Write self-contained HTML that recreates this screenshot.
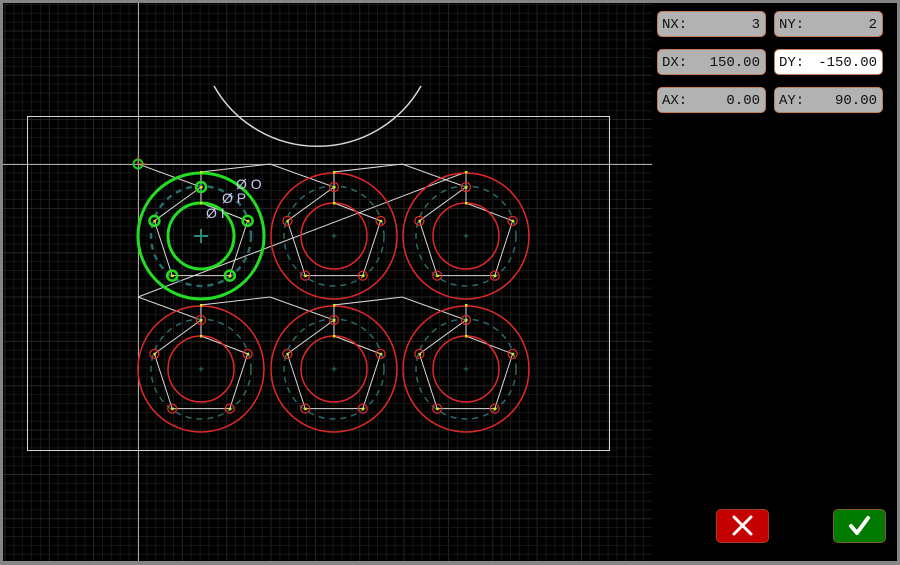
<!DOCTYPE html>
<html><head><meta charset="utf-8"><style>
html,body{margin:0;padding:0;background:#000;}
#w{position:relative;width:900px;height:565px;background:#858585;overflow:hidden;}
#c{position:absolute;left:3px;top:3px;width:894px;height:558px;background:#000;}
.f{position:absolute;width:109px;height:26px;background:#b2b2b2;border:1px solid #c87a52;border-radius:5px;font-family:"Liberation Mono",monospace;font-size:14px;color:#111;box-sizing:border-box;}
.f span{position:absolute;top:5px;}
.f .l{left:4px}.f .v{right:5px}
.b{position:absolute;width:53px;height:34px;border-radius:5px;box-sizing:border-box;}
</style></head><body>
<div id="w"><div id="c"></div>
<svg id="s" width="900" height="565" style="position:absolute;left:0;top:0">
<g id="grid"></g>
<g id="draw"></g>
<text x="236" y="189" fill="#c8c8f0" font-family="Liberation Sans,sans-serif" font-size="14">Ø O</text>
<text x="222" y="203" fill="#c8c8f0" font-family="Liberation Sans,sans-serif" font-size="14">Ø P</text>
<text x="206" y="218" fill="#c8c8f0" font-family="Liberation Sans,sans-serif" font-size="14">Ø I</text>
</svg>
<div class="f" style="left:657px;top:11px"><span class="l">NX:</span><span class="v">3</span></div>
<div class="f" style="left:774px;top:11px"><span class="l">NY:</span><span class="v">2</span></div>
<div class="f" style="left:657px;top:49px"><span class="l">DX:</span><span class="v">150.00</span></div>
<div class="f" style="left:774px;top:49px;background:#fff"><span class="l">DY:</span><span class="v">-150.00</span></div>
<div class="f" style="left:657px;top:87px"><span class="l">AX:</span><span class="v">0.00</span></div>
<div class="f" style="left:774px;top:87px"><span class="l">AY:</span><span class="v">90.00</span></div>
<div class="b" style="left:716px;top:509px;background:#c40000;border:1px solid #a04020">
<svg width="53" height="34" style="position:absolute;left:-1px;top:-1px"><path d="M18 8 L35 25 M35 8 L18 25" stroke="#fff" stroke-width="3" stroke-linecap="round"/></svg></div>
<div class="b" style="left:833px;top:509px;background:#007a00;border:1px solid #806020">
<svg width="53" height="34" style="position:absolute;left:-1px;top:-1px"><path d="M18 17 L24 24 L35 9" stroke="#fff" stroke-width="4" fill="none" stroke-linecap="round" stroke-linejoin="round"/></svg></div>
</div>
<script>
var NS="http://www.w3.org/2000/svg";
function el(p,t,a){var e=document.createElementNS(NS,t);for(var k in a)e.setAttribute(k,a[k]);p.appendChild(e);return e;}
var g=document.getElementById('grid'),d=document.getElementById('draw');
var sp=8.87;
for(var i=-20;i<80;i++){var x=138+i*sp;if(x<3||x>652)continue;var maj=(i%5==0);
el(g,'line',{x1:x,y1:3,x2:x,y2:561,stroke:maj?'#262626':'#171717','stroke-width':1});}
for(var i=-20;i<80;i++){var y=164+i*sp;if(y<3||y>561)continue;var maj=(i%5==0);
el(g,'line',{x1:3,y1:y,x2:652,y2:y,stroke:maj?'#262626':'#171717','stroke-width':1});}
var W='#d8d8d8';
el(d,'line',{x1:3,y1:164.5,x2:652,y2:164.5,stroke:'#aaa','stroke-width':1});
el(d,'line',{x1:138.5,y1:3,x2:138.5,y2:561,stroke:'#aaa','stroke-width':1});
el(d,'rect',{x:27.5,y:116.5,width:582,height:334,fill:'none',stroke:W,'stroke-width':1});
el(d,'path',{d:'M214 86 A119 119 0 0 0 421 86',fill:'none',stroke:W,'stroke-width':1.5});
var cx=[201,334,466],cy=[236,369];
function hv(x,y){var r=49,a=[-90,-162,126,54,-18];return a.map(function(t){return [x+r*Math.cos(t*Math.PI/180),y+r*Math.sin(t*Math.PI/180)];});}
var path='';
var starts=[[138,164],[138,297]];
for(var r=0;r<2;r++){
 for(var c=0;c<3;c++){
  var x=cx[c],y=cy[r],h=hv(x,y);
  var s= c==0?starts[r]:[x-64,y-72];
  path+='M'+s[0]+' '+s[1]+' L'+h[0][0]+' '+h[0][1];
  for(var k=1;k<5;k++)path+=' L'+h[k][0]+' '+h[k][1];
  path+=' L'+x+' '+(y-33)+' L'+x+' '+(y-64);
  if(c<2)path+=' L'+(x+69)+' '+(y-72);
  else if(r==0)path+=' L138 297';
 }
}
el(d,'path',{d:path,fill:'none',stroke:W,'stroke-width':1});
for(var r=0;r<2;r++)for(var c=0;c<3;c++){
 var x=cx[c],y=cy[r],gr=(r==0&&c==0),col=gr?'#22dd22':'#e02828',sw=gr?3:1.5;
 el(d,'circle',{cx:x,cy:y,r:50,fill:'none',stroke:'#2a6a6a','stroke-width':gr?2.5:1.5,'stroke-dasharray':'6 5'});
 el(d,'circle',{cx:x,cy:y,r:63,fill:'none',stroke:col,'stroke-width':sw});
 el(d,'circle',{cx:x,cy:y,r:33,fill:'none',stroke:col,'stroke-width':sw});
 var h=hv(x,y);
 h.forEach(function(p){el(d,'circle',{cx:p[0],cy:p[1],r:gr?5:4.5,fill:'none',stroke:col,'stroke-width':gr?2.5:1.3});
  el(d,'rect',{x:p[0]-1,y:p[1]-1,width:2.5,height:2.5,fill:'#e8e800'});});
 el(d,'rect',{x:x-1,y:y-65,width:2.5,height:2.5,fill:'#e8e800'});
 el(d,'rect',{x:x-1,y:y-34,width:2.5,height:2.5,fill:'#e8e800'});
 var pc=gr?'#2a8a7a':'#2a6a6a',pl=gr?7:2.5;
 el(d,'path',{d:'M'+(x-pl)+' '+y+' H'+(x+pl)+' M'+x+' '+(y-pl)+' V'+(y+pl),stroke:pc,'stroke-width':gr?2:1});
}
el(d,'circle',{cx:138,cy:164,r:4.5,fill:'none',stroke:'#22cc22','stroke-width':2});
el(d,'path',{d:'M138 156 V164 H146',stroke:'#e06020','stroke-width':1,fill:'none'});
</script>
</body></html>
